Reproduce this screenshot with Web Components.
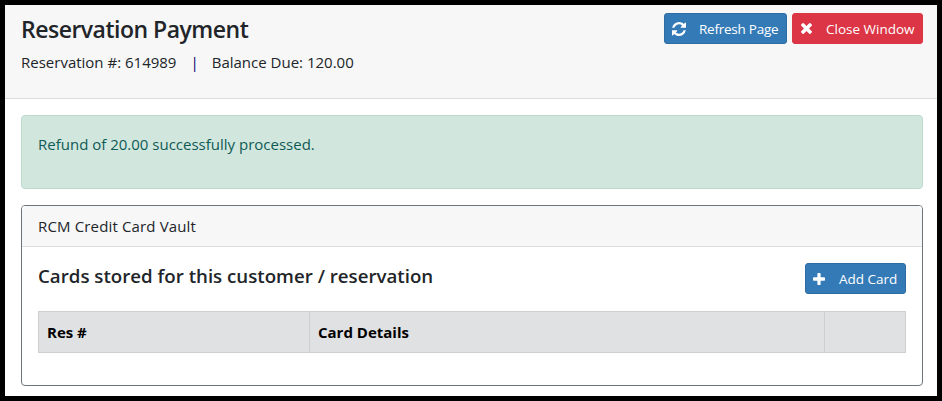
<!DOCTYPE html>
<html><head><meta charset="utf-8"><style>
html,body{margin:0;height:100%}
body{background:#000;font-family:"Open Sans","Noto Sans",sans-serif;font-size:15px;color:#212529}
rc-page{height:391px;width:932px;margin:5px 0 0 5px}
</style></head><body>
<rc-page>
  <rc-header slot="header" heading="Reservation Payment">
    <span>Reservation #: 614989</span><span class="sep" style="color:#00006e">|</span><span>Balance Due: 120.00</span>
    <rc-button slot="actions" icon="refresh" tone="blue" style="letter-spacing:-.25px;width:123px">Refresh Page</rc-button>
    <rc-button slot="actions" icon="close" tone="red" style="width:131px;--gap:12px">Close Window</rc-button>
  </rc-header>
  <rc-alert>Refund of 20.00 successfully processed.</rc-alert>
  <rc-card heading="RCM Credit Card Vault">
    <rc-section heading="Cards stored for this customer / reservation">
      <rc-button slot="action" icon="plus" tone="blue" style="width:101px;--gap:12px">Add Card</rc-button>
    </rc-section>
    <rc-table>
      <rc-th style="width:271px"><b>Res #</b></rc-th>
      <rc-th style="width:515px"><b>Card Details</b></rc-th>
      <rc-th style="flex:1"></rc-th>
    </rc-table>
  </rc-card>
</rc-page>
<script>
function def(name,html,init){
  customElements.define(name,class extends HTMLElement{
    connectedCallback(){
      if(this.shadowRoot)return;
      const r=this.attachShadow({mode:'open'});
      r.innerHTML=html;
      if(init)init(this,r);
    }
  });
}
const ICONS={
 refresh:'<svg viewBox="0 0 1536 1536" width="14" height="14"><path fill="#fff" d="M1511 928q0 5-1 7-64 268-268 434.500T764 1536q-146 0-282.500-55T238 1324l-129 129q-19 19-45 19t-45-19-19-45V960q0-26 19-45t45-19h448q26 0 45 19t19 45-19 45l-137 137q71 66 161 102t187 36q134 0 250-65t186-179q11-17 53-117 8-23 30-23h192q13 0 22.500 9.500t9.500 22.500zm25-800v448q0 26-19 45t-45 19h-448q-26 0-45-19t-19-45 19-45l138-138q-148-137-349-137-134 0-250 65T332 500q-11 17-53 117-8 23-30 23H50q-13 0-22.500-9.500T18 608v-7q65-268 270-434.500T768 0q146 0 284 55.500T1297 212l130-129q19-19 45-19t45 19 19 45z"/></svg>',
 close:'<svg viewBox="0 0 1188 1188" width="11" height="11" style="margin-left:1px"><path fill="#fff" d="M1188 956q0 40-28 68l-136 136q-28 28-68 28t-68-28L594 866l-294 294q-28 28-68 28t-68-28L28 1024Q0 996 0 956t28-68l294-294L28 300Q0 272 0 232t28-68L164 28q28-28 68-28t68 28l294 294L888 28q28-28 68-28t68 28l136 136q28 28 28 68t-28 68L866 594l294 294q28 28 28 68z"/></svg>',
 plus:'<svg viewBox="0 0 1408 1408" width="12" height="12"><path fill="#fff" d="M1408 608v192q0 40-28 68t-68 28H896v416q0 40-28 68t-68 28H608q-40 0-68-28t-28-68V896H96q-40 0-68-28T0 800V608q0-40 28-68t68-28h416V96q0-40 28-68t68-28h192q40 0 68 28t28 68v416h416q40 0 68 28t28 68z"/></svg>'
};
def('rc-page',`<style>:host{display:flex;flex-direction:column;background:#fff;box-sizing:border-box}</style><slot name="header"></slot><div style="display:flex;flex-direction:column;gap:16px;padding:16px 14px 0 16px"><slot></slot></div>`);
def('rc-header',`<style>
:host{display:flex;flex:none;justify-content:space-between;background:#f7f7f7;border-bottom:1px solid #dcdcdc;height:94px;box-sizing:border-box;padding:8px 14px 0 16px}
h1{font:600 23px/32px "Open Sans","Noto Sans",sans-serif;margin:0;color:#212529;letter-spacing:-.5px}
.sub{display:flex;margin-top:5px;font-size:15px;line-height:24px}
::slotted(.sep){margin:0 13px 0 14px}
.act{display:flex;gap:5px;align-items:flex-start}
</style><div><h1></h1><div class="sub"><slot></slot></div></div><div class="act"><slot name="actions"></slot></div>`,(h,r)=>{r.querySelector('h1').textContent=h.getAttribute('heading')});
def('rc-button',`<style>
:host{display:inline-flex;flex:none;align-items:center;height:31px;box-sizing:border-box;border-radius:3px;color:#fff;font-size:13.5px;padding:0 0 0 7px;white-space:nowrap;border:1px solid transparent}
.i{display:inline-flex;width:14px;justify-content:flex-start;margin-right:var(--gap,13px)}
</style><span class="i"></span><slot></slot>`,(h,r)=>{
  r.querySelector('.i').innerHTML=ICONS[h.getAttribute('icon')];
  const red=h.getAttribute('tone')==='red';
  h.style.background=red?'#dc3545':'#337ab7';h.style.borderColor=red?'#dc3545':'#2e6da4';
});
def('rc-alert',`<style>
:host{display:block;flex:none;height:74px;box-sizing:border-box;background:#d1e7dd;border:1px solid #badbcc;border-radius:4px;color:#0f5a56;padding:16px;font-size:15px;line-height:24px}
</style><slot></slot>`);
def('rc-card',`<style>
:host{display:block;flex:none;height:181px;box-sizing:border-box;border:1px solid #6c757d;border-radius:4px;overflow:hidden}
.h{height:41px;box-sizing:border-box;background:#f7f7f7;border-bottom:1px solid #dcdcdc;padding:0 16px;display:flex;align-items:center;font-size:15px;letter-spacing:.15px}
.b{padding:16px}
</style><div class="h"></div><div class="b"><slot></slot></div>`,(h,r)=>{r.querySelector('.h').textContent=h.getAttribute('heading')});
def('rc-section',`<style>
:host{display:flex;justify-content:space-between;align-items:flex-start;height:48px}
h2{font:600 18.7px/26px "Open Sans","Noto Sans",sans-serif;margin:0;color:#212529}
</style><h2></h2><slot name="action"></slot>`,(h,r)=>{r.querySelector('h2').textContent=h.getAttribute('heading')});
def('rc-table',`<style>
:host{display:flex;height:42px;box-sizing:border-box;background:#e0e1e3;border:1px solid #cfcfcf;color:#000}
</style><slot></slot>`);
def('rc-th',`<style>
:host{display:flex;align-items:center;box-sizing:border-box;padding:0 8px;border-right:1px solid #cfcfcf;font-size:15px}
:host(:last-child){border-right:0}
</style><slot></slot>`);
</script>
</body></html>
